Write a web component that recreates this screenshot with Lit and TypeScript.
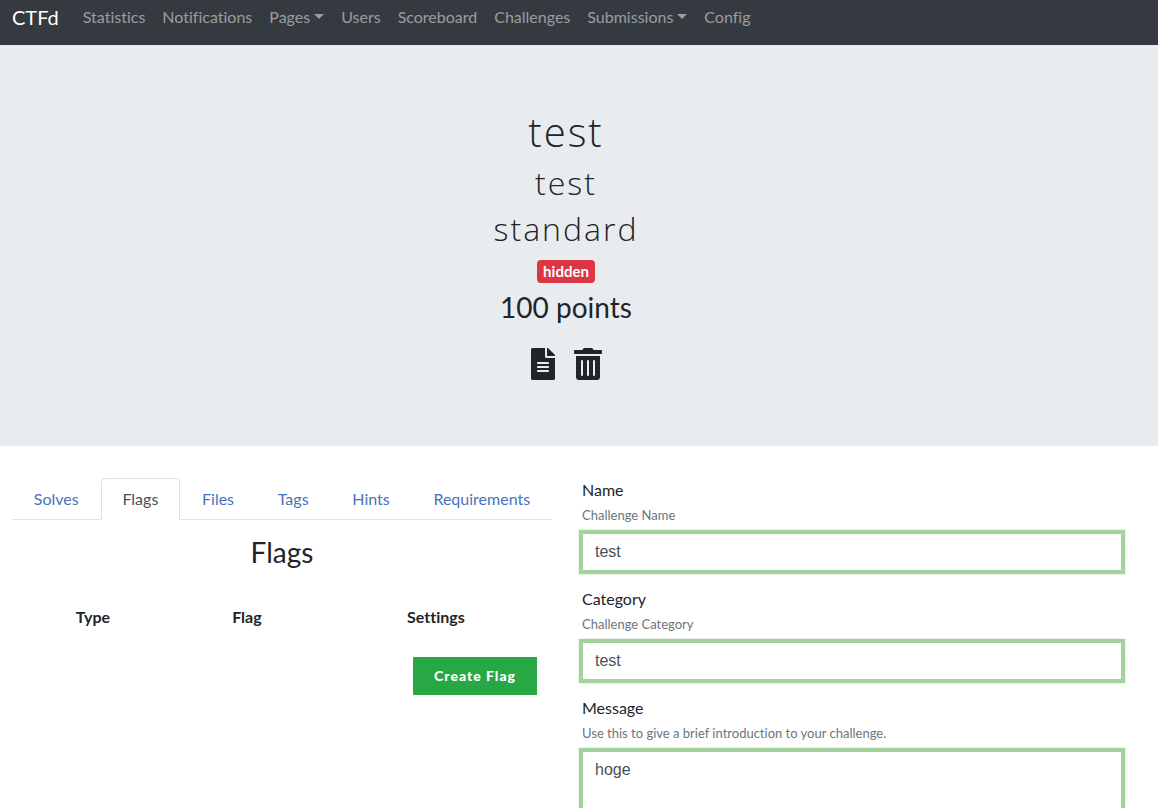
import { LitElement, html, css, svg } from "lit";
import { customElement, state } from "lit/decorators.js";

const navItems = [
  { label: "Statistics" },
  { label: "Notifications" },
  { label: "Pages", menu: true },
  { label: "Users" },
  { label: "Scoreboard" },
  { label: "Challenges" },
  { label: "Submissions", menu: true },
  { label: "Config" },
];

const tabs = ["Solves", "Flags", "Files", "Tags", "Hints", "Requirements"];

const filePath = svg`<path d="M224 136V0H24C10.700 0 0 10.700 0 24v464c0 13.300 10.700 24 24 24h336c13.300 0 24-10.700 24-24V160H248c-13.200 0-24-10.800-24-24zm64 236c0 6.600-5.400 12-12 12H108c-6.600 0-12-5.400-12-12v-8c0-6.600 5.400-12 12-12h168c6.600 0 12 5.400 12 12v8zm0-64c0 6.600-5.400 12-12 12H108c-6.600 0-12-5.400-12-12v-8c0-6.600 5.400-12 12-12h168c6.600 0 12 5.400 12 12v8zm0-72v8c0 6.600-5.400 12-12 12H108c-6.600 0-12-5.400-12-12v-8c0-6.600 5.400-12 12-12h168c6.600 0 12 5.400 12 12zm96-114.100v6.100H256V0h6.100c6.400 0 12.500 2.500 17 7l97.900 98c4.500 4.500 7 10.600 7 16.900z"/>`;
const trashPath = svg`<path d="M32 464a48 48 0 0 0 48 48h288a48 48 0 0 0 48-48V128H32zm272-256a16 16 0 0 1 32 0v224a16 16 0 0 1-32 0zm-96 0a16 16 0 0 1 32 0v224a16 16 0 0 1-32 0zm-96 0a16 16 0 0 1 32 0v224a16 16 0 0 1-32 0zM432 32H312l-9.400-18.700A24 24 0 0 0 281.100 0H166.800a23.720 23.720 0 0 0-21.400 13.300L136 32H16A16 16 0 0 0 0 48v32a16 16 0 0 0 16 16h416a16 16 0 0 0 16-16V48a16 16 0 0 0-16-16z"/>`;

@customElement("app-root")
export class AppRoot extends LitElement {
  @state() private tab = "Flags";

  static styles = css`
    :host {
      display: block;
      color: #212529;
      background: #fff;
      font: 400 16px/24px Lato, sans-serif;
      font-variant-ligatures: none;
    }
    * { box-sizing: border-box; }
    a { text-decoration: none; }
    h1, h2, h3 { margin: 0 0 8px; }

    .navbar {
      display: flex;
      flex-wrap: wrap;
      align-items: center;
      padding: 5px 12px 16px;
      background: #343a40;
    }
    .brand { margin-right: 16px; color: #fff; font-size: 20px; }
    .links { display: flex; flex-wrap: wrap; gap: 1px; margin: 0; padding: 0; list-style: none; }
    .link { display: flex; align-items: center; gap: 4px; padding: 0 8px; color: rgba(255, 255, 255, 0.5); }
    .caret { margin-bottom: 2px; border: 5px solid transparent; border-top-color: currentColor; border-bottom: 0; }

    .hero {
      padding: 64px 38px 66px 12px;
      background: #e9ecef;
      text-align: center;
    }
    .title, .subtitle { font-family: "Open Sans", Lato, sans-serif; font-weight: 300; letter-spacing: 2px; }
    .title { font-size: 40px; line-height: 46px; margin-bottom: 10px; }
    .subtitle { font-size: 32px; line-height: 36px; margin-bottom: 10px; }
    .status { display: flex; justify-content: center; padding: 3px 0 8px; }
    .badge {
      padding: 0 6px;
      border-radius: 4px;
      background: #dc3545;
      color: #fff;
      font-size: 15px;
      line-height: 23px;
      font-weight: 700;
    }
    .heading { font-size: 28px; line-height: 32px; margin-bottom: 10px; font-weight: 400; }
    .actions { display: flex; justify-content: center; gap: 19px; padding-top: 15px; }
    .icon-button { display: flex; padding: 0; border: 0; background: none; color: inherit; cursor: pointer; }
    .icon { height: 32px; fill: currentColor; }

    .columns {
      display: grid;
      grid-template-columns: 1fr 1fr;
      gap: 30px;
      padding: 32px 36px 16px 12px;
    }
    .tabs { display: flex; border-bottom: 1px solid #dee2e6; }
    .tab {
      flex: 1 1 auto;
      margin-bottom: -1px;
      padding: 8px 16px;
      border: 1px solid transparent;
      border-radius: 4px 4px 0 0;
      background: none;
      color: #4674b9;
      font: inherit;
      cursor: pointer;
    }
    .tab[aria-selected="true"] {
      border-color: #dee2e6 #dee2e6 #fff;
      background: #fff;
      color: #495057;
    }
    .panel { padding-top: 16px; text-align: center; }
    .flags { width: 100%; margin-top: 25px; border-collapse: collapse; table-layout: fixed; }
    .flags th { padding: 12px; font-weight: 700; }
    .col-type { width: 30%; }
    .col-flag { width: 27%; }
    .footer { display: flex; justify-content: flex-end; padding: 16px 15px 0; }
    .create {
      padding: 7px 21px;
      border: 0;
      background: #28a745;
      color: #fff;
      font: 900 14px/24px Lato, sans-serif;
      letter-spacing: 1px;
      cursor: pointer;
    }

    .field { display: flex; flex-direction: column; margin-bottom: 16px; }
    .hint { margin: 3px 0 8px; color: #6c757d; font-size: 13px; line-height: 20px; }
    .control {
      width: 100%;
      margin: 0;
      padding: 6px 12px;
      border: 1px solid #a3d39c;
      border-radius: 0;
      outline: 0;
      box-shadow: 0 0 0 3px #a3d39c, 0 0 0 4px #edf6eb;
      background: #fff;
      color: #495057;
      font: 400 16px/24px "Liberation Sans", Arial, sans-serif;
      resize: vertical;
    }
  `;

  private field(id: string, label: string, hint: string, control: unknown) {
    return html`<div class="field">
      <label for=${id}>${label}</label>
      <small class="hint" id="${id}-hint">${hint}</small>
      ${control}
    </div>`;
  }

  render() {
    return html`
      <nav class="navbar">
        <a class="brand" href="#">CTFd</a>
        <ul class="links">
          ${navItems.map(
            (item) => html`<li><a class="link" href="#">${item.label}${item.menu ? html`<span class="caret"></span>` : ""}</a></li>`
          )}
        </ul>
      </nav>

      <header class="hero">
        <h1 class="title">test</h1>
        <h2 class="subtitle">test</h2>
        <h2 class="subtitle">standard</h2>
        <div class="status"><span class="badge">hidden</span></div>
        <h3 class="heading">100 points</h3>
        <div class="actions">
          <button class="icon-button" type="button" aria-label="Preview">
            <svg class="icon" viewBox="0 0 384 512" width="24" height="32">${filePath}</svg>
          </button>
          <button class="icon-button" type="button" aria-label="Delete">
            <svg class="icon" viewBox="0 0 448 512" width="28" height="32">${trashPath}</svg>
          </button>
        </div>
      </header>

      <main class="columns">
        <section>
          <div class="tabs" role="tablist">
            ${tabs.map(
              (name) => html`<button class="tab" type="button" role="tab"
                aria-selected=${this.tab === name ? "true" : "false"}
                @click=${() => (this.tab = name)}>${name}</button>`
            )}
          </div>
          <div class="panel" role="tabpanel">
            <h3 class="heading">${this.tab}</h3>
            <table class="flags">
              <thead>
                <tr>
                  <th class="col-type" scope="col">Type</th>
                  <th class="col-flag" scope="col">Flag</th>
                  <th scope="col">Settings</th>
                </tr>
              </thead>
            </table>
            <div class="footer"><button class="create" type="button">Create Flag</button></div>
          </div>
        </section>

        <form>
          ${this.field("name", "Name", "Challenge Name",
            html`<input class="control" id="name" type="text" aria-describedby="name-hint" .value=${"test"} />`)}
          ${this.field("category", "Category", "Challenge Category",
            html`<input class="control" id="category" type="text" aria-describedby="category-hint" .value=${"test"} />`)}
          ${this.field("message", "Message", "Use this to give a brief introduction to your challenge.",
            html`<textarea class="control" id="message" rows="10" aria-describedby="message-hint" .value=${"hoge"}></textarea>`)}
        </form>
      </main>
    `;
  }
}
